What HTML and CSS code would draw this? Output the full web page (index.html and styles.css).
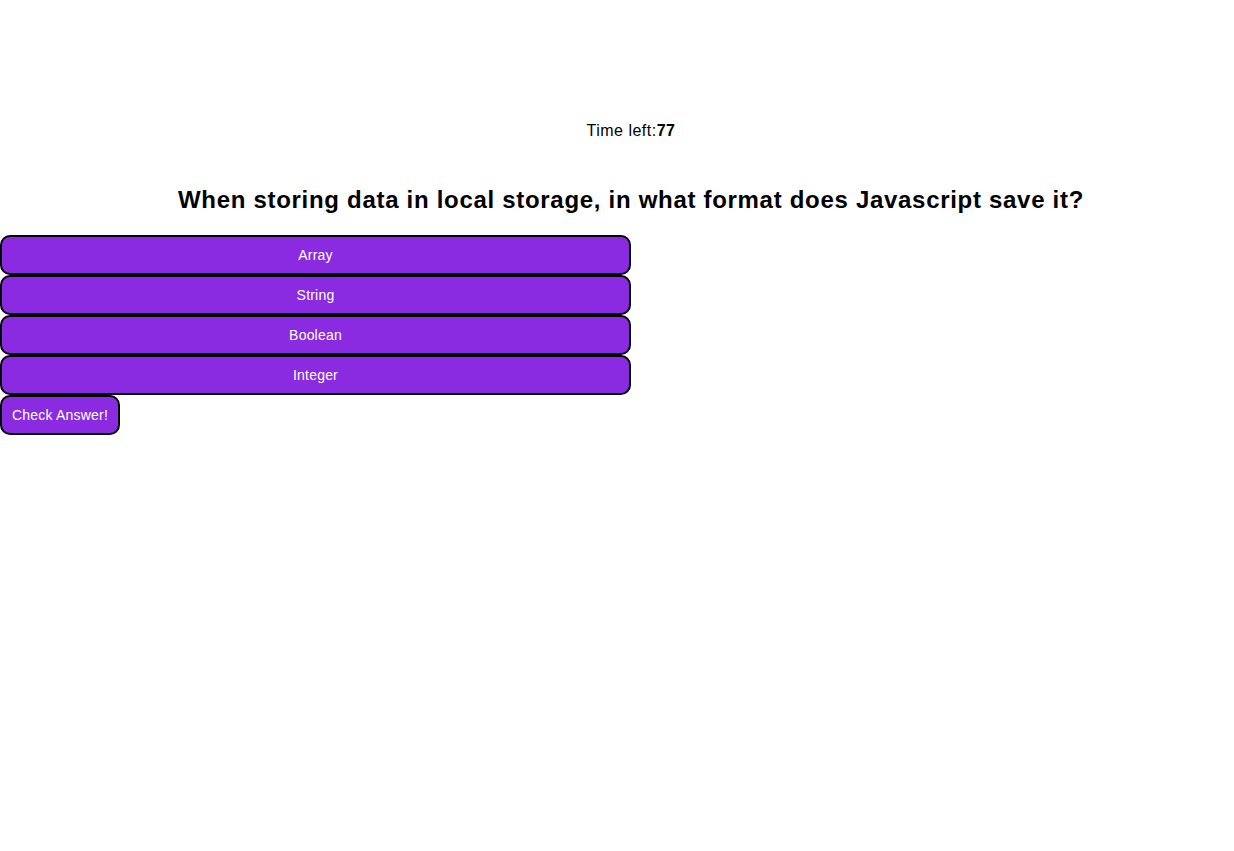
FILE: index.html
```html
<!DOCTYPE html>
<html>
<head>
<meta charset="utf-8">
<link rel="stylesheet" href="styles.css">
</head>
<body>
<div class="page">
  <p class="timer">Time left:<strong>77</strong></p>
  <h2 class="question">When storing data in local storage, in what format does Javascript save it?</h2>
  <div class="choices">
    <button class="choice">Array</button>
    <button class="choice">String</button>
    <button class="choice">Boolean</button>
    <button class="choice">Integer</button>
  </div>
  <button class="check">Check Answer!</button>
</div>
</body>
</html>
```
FILE: styles.css
```css
html, body {
  margin: 0;
  padding: 0;
  overflow: hidden;
  background: #fff;
  font-family: "Liberation Sans", Arial, sans-serif;
}
.page {
  width: 1262px;
  padding-top: 122px;
}
.timer {
  margin: 0;
  text-align: center;
  font-size: 16px;
  line-height: 18px;
  letter-spacing: 0.5px;
  color: #000;
}
.question {
  margin: 46px 0 21px;
  text-align: center;
  font-size: 24px;
  line-height: 28px;
  letter-spacing: 0.7px;
  font-weight: bold;
}
.choices {
  display: flex;
  flex-direction: column;
  width: 631px;
}
.choice, .check {
  background: #8a2be2;
  color: #fff;
  border: 2px solid #000;
  border-radius: 10px;
  font-family: "Liberation Sans", Arial, sans-serif;
  font-size: 14px;
  letter-spacing: 0.2px;
  height: 40px;
  padding: 0 10px;
  margin: 0;
}
.choice {
  width: 631px;
}
.check {
  display: block;
  width: 120px;
}
```
